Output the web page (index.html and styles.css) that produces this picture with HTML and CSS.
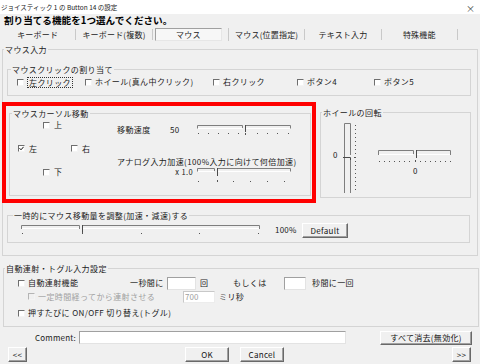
FILE: index.html
```html
<!DOCTYPE html>
<html lang="ja">
<head>
<meta charset="utf-8">
<title>ジョイスティック 1 の Button 14 の設定</title>
<link rel="stylesheet" href="styles.css">
</head>
<body>
<div class="titlebar"><span class="title">ジョイスティック 1 の Button 14 の設定</span><span class="close">×</span></div>
<div class="heading">割り当てる機能を1つ選んでください。</div>
<div class="tabs">
  <div class="tab">キーボード</div>
  <div class="tab">キーボード(複数)</div>
  <div class="tab active"><span class="tab-box">マウス</span></div>
  <div class="tab">マウス(位置指定)</div>
  <div class="tab">テキスト入力</div>
  <div class="tab">特殊機能</div>
</div>

<fieldset class="group g-main">
  <legend>マウス入力</legend>
  <div class="main-body">
    <fieldset class="group g-click">
      <legend>マウスクリックの割り当て</legend>
      <div class="click-row">
        <label class="chk"><span class="cb"></span><span class="focus">左クリック</span></label>
        <label class="chk"><span class="cb"></span><span>ホイール(真ん中クリック)</span></label>
        <label class="chk"><span class="cb"></span><span>右クリック</span></label>
        <label class="chk"><span class="cb"></span><span>ボタン4</span></label>
        <label class="chk"><span class="cb"></span><span>ボタン5</span></label>
      </div>
    </fieldset>

    <div class="move-row">
      <div class="highlight">
        <fieldset class="group g-cursor">
          <legend>マウスカーソル移動</legend>
          <div class="cursor-body">
            <div class="dpad">
              <label class="chk d-up"><span class="cb"></span><span>上</span></label>
              <label class="chk d-left"><span class="cb checked"><svg width="5" height="5" viewBox="0 0 5 5"><path d="M0.5 2.2L2 3.8L4.6 0.8" fill="none" stroke="#111" stroke-width="1"/></svg></span><span>左</span></label>
              <label class="chk d-right"><span class="cb"></span><span>右</span></label>
              <label class="chk d-down"><span class="cb"></span><span>下</span></label>
            </div>
            <div class="speed">
              <div class="speed-row">
                <span class="lbl-speed">移動速度</span>
                <span class="val">50</span>
                <svg class="slider" width="94" height="12" viewBox="0 0 94 12">
                  <path d="M0.5 4.5V1.5H45.5V4M48.5 1.5H93.5V4.5" fill="none" stroke="#7e7e7e"/>
                  <path d="M1 4.5H45M49 4.5H93" stroke="#fff"/>
                  <path d="M48.5 1V8" stroke="#4a4a4a"/>
                  <g fill="#555"><rect x="1" y="9" width="1" height="1"/><rect x="11" y="9" width="1" height="1"/><rect x="21" y="9" width="1" height="1"/><rect x="31" y="9" width="1" height="1"/><rect x="41" y="9" width="1" height="1"/><rect x="48" y="9" width="1" height="2"/><rect x="60" y="9" width="1" height="1"/><rect x="70" y="9" width="1" height="1"/><rect x="80" y="9" width="1" height="1"/><rect x="91" y="9" width="1" height="1"/></g>
                </svg>
              </div>
              <div class="speed-note">アナログ入力加速(100%入力に向けて何倍加速)</div>
              <div class="speed-row3">
                <span class="mult">x 1.0</span>
                <svg class="slider" width="94" height="16" viewBox="0 0 94 16">
                  <path d="M0.5 4.5V1.5H17.5V4M20.5 1.5H93.5V4.5" fill="none" stroke="#7e7e7e"/>
                  <path d="M1 4.5H17M21 4.5H93" stroke="#fff"/>
                  <path d="M20.5 1V9" stroke="#4a4a4a"/>
                  <g fill="#555"><rect x="1" y="14" width="1" height="1"/><rect x="20" y="13" width="1" height="2"/><rect x="36" y="14" width="1" height="1"/><rect x="53" y="14" width="1" height="1"/><rect x="70" y="14" width="1" height="1"/><rect x="87" y="14" width="1" height="1"/></g>
                </svg>
              </div>
            </div>
          </div>
        </fieldset>
      </div>

      <fieldset class="group g-wheel">
        <legend>ホイールの回転</legend>
        <div class="wheel-body">
          <span class="wheel-zero">0</span>
          <svg class="vslider" width="18" height="72" viewBox="0 0 18 72">
            <path d="M4.5 72V2.5H10.5V34M10.5 38V72" fill="none" stroke="#7e7e7e"/>
            <path d="M3 36.5H10.5V39" fill="none" stroke="#4a4a4a"/>
            <g fill="#555"><rect x="15" y="4" width="1" height="1"/><rect x="15" y="8" width="1" height="1"/><rect x="15" y="12" width="1" height="1"/><rect x="15" y="16" width="1" height="1"/><rect x="15" y="20" width="1" height="1"/><rect x="15" y="24" width="1" height="1"/><rect x="15" y="28" width="1" height="1"/><rect x="15" y="32" width="1" height="1"/><rect x="14" y="36" width="2" height="1"/><rect x="15" y="40" width="1" height="1"/><rect x="15" y="44" width="1" height="1"/><rect x="15" y="48" width="1" height="1"/><rect x="15" y="52" width="1" height="1"/><rect x="15" y="56" width="1" height="1"/><rect x="15" y="60" width="1" height="1"/><rect x="15" y="64" width="1" height="1"/><rect x="15" y="68" width="1" height="1"/></g>
          </svg>
          <div class="hwheel">
            <svg class="slider" width="74" height="16" viewBox="0 0 74 16">
              <path d="M0.5 7V2.5H35.5V6M38.5 2.5H72.5V7" fill="none" stroke="#7e7e7e"/>
              <path d="M1 6.5H35M39 6.5H72" stroke="#fff"/>
              <path d="M38.5 2V10" stroke="#4a4a4a"/>
              <g fill="#555"><rect x="1" y="13" width="1" height="1"/><rect x="6" y="13" width="1" height="1"/><rect x="11" y="13" width="1" height="1"/><rect x="16" y="13" width="1" height="1"/><rect x="21" y="13" width="1" height="1"/><rect x="26" y="13" width="1" height="1"/><rect x="31" y="13" width="1" height="1"/><rect x="37" y="12" width="1" height="2"/><rect x="42" y="13" width="1" height="1"/><rect x="47" y="13" width="1" height="1"/><rect x="52" y="13" width="1" height="1"/><rect x="57" y="13" width="1" height="1"/><rect x="62" y="13" width="1" height="1"/><rect x="67" y="13" width="1" height="1"/><rect x="72" y="13" width="1" height="1"/></g>
            </svg>
            <span class="hwheel-zero">0</span>
          </div>
        </div>
      </fieldset>
    </div>

    <fieldset class="group g-adjust">
      <legend>一時的にマウス移動量を調整(加速・減速)する</legend>
      <div class="adjust-body">
        <svg class="slider" width="240" height="14" viewBox="0 0 240 14">
          <path d="M0.5 7V3.5H58.5V7M61.5 3.5H238.5V7" fill="none" stroke="#7e7e7e"/>
          <path d="M1 6.5H58M62 6.5H238" stroke="#fff"/>
          <path d="M61.5 3V10" stroke="#4a4a4a"/>
          <g fill="#555"><rect x="1" y="11" width="1" height="1"/><rect x="61" y="10" width="1" height="2"/><rect x="120" y="11" width="1" height="1"/><rect x="178" y="11" width="1" height="1"/><rect x="237" y="11" width="1" height="1"/></g>
        </svg>
        <span class="pct">100%</span>
        <button class="btn btn-default">Default</button>
      </div>
    </fieldset>
  </div>
</fieldset>

<fieldset class="group g-auto">
  <legend>自動連射・トグル入力設定</legend>
  <div class="auto-body">
    <div class="auto-row">
      <label class="chk w-auto"><span class="cb"></span><span>自動連射機能</span></label>
      <span class="per-sec">一秒間に</span>
      <input class="field f-count" type="text" value="">
      <span class="kai">回</span>
      <span class="moshiku">もしくは</span>
      <input class="field f-sec" type="text" value="">
      <span class="per-once">秒間に一回</span>
    </div>
    <div class="auto-row2">
      <label class="chk w-delay disabled"><span class="cb"></span><span>一定時間経ってから連射させる</span></label>
      <input class="field f-ms" type="text" value="700" disabled>
      <span class="ms">ミリ秒</span>
    </div>
    <div class="auto-row3">
      <label class="chk"><span class="cb"></span><span>押すたびに ON/OFF 切り替え(トグル)</span></label>
    </div>
  </div>
</fieldset>

<div class="comment-row">
  <span class="comment-lbl">Comment:</span>
  <input class="field f-comment" type="text" value="">
  <button class="btn btn-clear">すべて消去(無効化)</button>
</div>

<div class="nav-row">
  <button class="btn btn-nav">&lt;&lt;</button>
  <button class="btn btn-ok">OK</button>
  <button class="btn btn-cancel">Cancel</button>
  <button class="btn btn-nav btn-next">&gt;&gt;</button>
</div>
</body>
</html>
```

FILE: styles.css
```css
* { box-sizing: border-box; }
html, body { margin: 0; padding: 0; }
body {
  width: 480px;
  height: 364px;
  overflow: hidden;
  background: #f0f0f0;
  font-family: "Noto Sans CJK JP", "Noto Sans", sans-serif;
  font-size: 8px;
  letter-spacing: 0.4px;
  color: #1a1a1a;
}
svg { display: block; flex: none; }

.titlebar {
  height: 14px;
  background: #fff;
  display: flex;
  align-items: center;
  justify-content: space-between;
  padding: 0 5px 0 1px;
  letter-spacing: 0;
}
.title { font-size: 6.5px; line-height: 8px; color: #222; }
.close { font-size: 9px; line-height: 9px; color: #444; margin-top: 2px; }

.heading {
  height: 14px;
  line-height: 13px;
  padding-left: 4px;
  font-size: 9.6px;
  font-weight: 700;
  letter-spacing: 0;
  color: #000;
  white-space: nowrap;
}

.tabs {
  display: grid;
  grid-template-columns: repeat(6, 76.33px);
  height: 13px;
  letter-spacing: 0.2px;
}
.tab {
  border-right: 1px solid #c9c9c9;
  margin: 1px 0;
  display: flex;
  align-items: center;
  justify-content: center;
  line-height: 11px;
  color: #222;
  white-space: nowrap;
}
.tab.active { margin: 0; padding: 0 6px 0 2px; }
.tab-box {
  flex: 1;
  height: 13px;
  display: flex;
  align-items: center;
  justify-content: center;
  border: 1px solid;
  border-color: #a0a0a0 #e6e6e6 #e6e6e6 #a0a0a0;
  background: #f7f7f7;
}

.group {
  margin: 0;
  padding: 0;
  border: 1px solid #d4d4d4;
  min-width: 0;
}
.group > legend {
  padding: 0 1px;
  height: 9px;
  line-height: 9px;
  font-size: 8px;
  color: #1a1a1a;
  white-space: nowrap;
}

.g-main { margin: 4px 0 0 2px; width: 476px; }
.g-main > legend { margin-left: 1px; }
.main-body { padding: 11px 6px 12px 4px; }

.g-click > legend { margin-left: 3px; }
.click-row {
  display: grid;
  grid-template-columns: 68px 128px 84px 77px auto;
  align-items: center;
  height: 16px;
  padding-left: 9px;
  margin-bottom: 5px;
}

.chk {
  display: flex;
  align-items: center;
  gap: 3px;
  line-height: 10px;
  white-space: nowrap;
}
.cb {
  width: 7px;
  height: 7px;
  flex: none;
  border: 1px solid;
  border-color: #6e6e6e #f4f4f4 #f4f4f4 #6e6e6e;
  background: #fff;
  display: flex;
  align-items: center;
  justify-content: center;
}
.focus {
  border: 1px dotted #333;
  padding: 0 1px;
  line-height: 9px;
}
.chk.disabled { color: #a0a0a0; }
.chk.disabled .cb { border-color: #b4b4b4 #f4f4f4 #f4f4f4 #b4b4b4; background: #f0f0f0; }

.move-row { display: flex; align-items: flex-start; margin-top: 6px; }
.highlight {
  margin-left: -5px;
  border: 4px solid #ff0000;
  padding: 3px 1px 3px 3px;
}
.g-cursor { width: 302px; }
.g-cursor > legend { margin-left: 2px; }
.cursor-body { height: 77px; display: flex; }
.dpad {
  display: grid;
  grid-template-columns: 25px 28px 46px;
  grid-template-rows: 14px 14px 14px;
  row-gap: 9.5px;
  padding-left: 8px;
  align-items: center;
}
.dpad .chk { gap: 4px; }
.d-up { grid-column: 2; grid-row: 1; }
.d-left { grid-column: 1; grid-row: 2; }
.d-right { grid-column: 3; grid-row: 2; }
.d-down { grid-column: 2; grid-row: 3; }

.speed { display: flex; flex-direction: column; }
.speed-row { display: flex; align-items: center; height: 12px; margin-top: 6px; }
.lbl-speed { width: 53px; line-height: 10px; }
.val { width: 27px; line-height: 10px; }
.speed-note { margin-top: 21px; height: 10px; line-height: 10px; white-space: nowrap; }
.speed-row3 { display: flex; height: 16px; }
.mult { width: 80px; text-align: right; padding-right: 4px; line-height: 10px; font-size: 7.5px; }

.g-wheel { width: 151px; margin: 6px 0 0 4px; }
.g-wheel > legend { margin-left: 1px; }
.wheel-body { height: 80px; display: flex; align-items: flex-start; padding-left: 12px; }
.wheel-zero { width: 7px; line-height: 10px; margin-top: 33px; }
.vslider { margin-top: 4px; }
.hwheel { display: flex; flex-direction: column; margin: 31px 0 0 20px; }
.hwheel-zero { padding-left: 35px; line-height: 10px; margin-top: 2px; }

.g-adjust { margin-top: 8px; width: 463px; }
.g-adjust > legend { margin-left: 5px; }
.adjust-body { height: 22px; display: flex; align-items: flex-start; padding-left: 13px; }
.adjust-body .slider { margin-top: 2px; }
.pct { width: 27px; margin: 5px 0 0 14px; line-height: 10px; letter-spacing: 0.2px; }

.btn {
  font-family: inherit;
  font-size: 8px;
  letter-spacing: 0.3px;
  color: #111;
  background: #f0f0f0;
  border: 1px solid;
  border-color: #fff #696969 #696969 #fff;
  box-shadow: inset -1px -1px 0 #a0a0a0;
  padding: 0;
  margin: 0;
  line-height: 10px;
  display: flex;
  align-items: center;
  justify-content: center;
  white-space: nowrap;
  flex: none;
}
.btn-default { width: 46px; height: 15px; margin-top: 3px; }

.field {
  font-family: inherit;
  font-size: 8px;
  color: #111;
  background: #fff;
  border: 1px solid;
  border-color: #a0a0a0 #e3e3e3 #e3e3e3 #a0a0a0;
  padding: 0 1px;
  margin: 0;
  outline: none;
  flex: none;
}
.field:disabled { color: #a0a0a0; background: #fff; border-color: #c8c8c8 #ececec #ececec #c8c8c8; }

.g-auto { margin: 8px 0 0 3px; width: 476px; }
.g-auto > legend { margin-left: 1px; }
.auto-body { padding: 3px 0 6px 14px; }
.auto-row { display: flex; align-items: center; height: 14px; }
.w-auto { width: 112px; }
.per-sec { width: 37px; line-height: 10px; }
.f-count { width: 29px; height: 13px; }
.kai { width: 33px; margin-left: 4px; line-height: 10px; }
.moshiku { width: 51px; line-height: 10px; }
.f-sec { width: 22px; height: 13px; }
.per-once { margin-left: 6px; line-height: 10px; }
.auto-row2 { display: flex; align-items: center; height: 13px; padding-left: 10px; }
.w-delay { width: 155px; }
.f-ms { width: 32px; height: 12px; }
.ms { margin-left: 4px; line-height: 10px; }
.auto-row3 { display: flex; align-items: center; height: 14px; margin-top: 3px; }

.comment-row { display: flex; align-items: flex-start; height: 14px; margin-top: 4px; padding-left: 35px; }
.comment-lbl { width: 44px; line-height: 13px; letter-spacing: 0.2px; }
.f-comment { width: 267px; height: 13px; }
.btn-clear { width: 92px; height: 14px; margin-left: 34px; }

.nav-row { display: flex; height: 15px; margin-top: 2px; padding: 0 9px 0 8px; }
.btn-nav { width: 19px; height: 15px; }
.btn-ok { width: 44px; height: 15px; margin-left: 158px; }
.btn-cancel { width: 44px; height: 15px; margin-left: 11px; }
.btn-next { margin-left: auto; }
```
